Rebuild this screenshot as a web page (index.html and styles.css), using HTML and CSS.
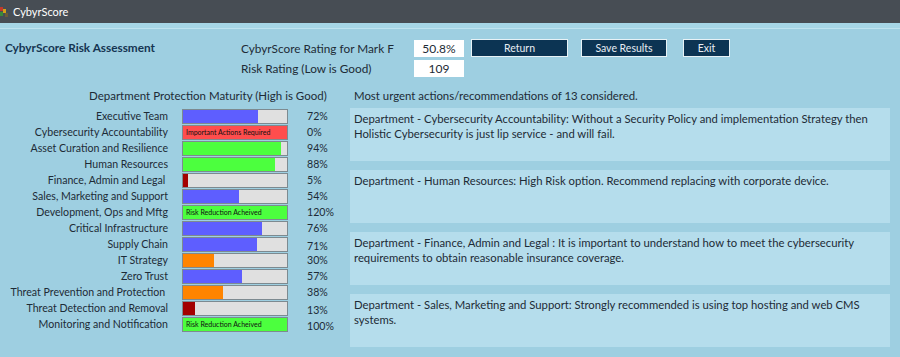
FILE: index.html
```html
<!DOCTYPE html>
<html lang="en">
<head>
    <meta charset="UTF-8">
    <title>CybyrScore</title>
    <link rel="stylesheet" href="styles.css">
</head>
<body>
<div class="titlebar">
    <svg class="appicon" width="9" height="12" viewBox="0 0 9 12">
        <rect x="0" y="1" width="3" height="4" fill="#c0392b"/>
        <rect x="3" y="3" width="3" height="4" fill="#d4a017"/>
        <rect x="0" y="6" width="3" height="4" fill="#3a8a3a"/>
        <rect x="5" y="7" width="3" height="4" fill="#6b5b3a"/>
    </svg>
    <span>CybyrScore</span>
</div>
<div class="band"></div>
<div class="main">
    <div class="top">
        <div class="brand">CybyrScore Risk Assessment</div>
        <div class="ratings">
            <label>CybyrScore Rating for Mark F</label><div class="value">50.8%</div>
            <label>Risk Rating (Low is Good)</label><div class="value">109</div>
        </div>
        <div class="buttons">
            <button class="btn btn-return">Return</button>
            <button class="btn btn-save">Save Results</button>
            <button class="btn btn-exit">Exit</button>
        </div>
    </div>

    <div class="content">
        <div class="maturity">
            <div class="heading">Department Protection Maturity (High is Good)</div>
            <div class="rows">
                <div class="row"><span class="name">Executive Team</span><div class="bar"><div class="fill blue" style="width:72%"></div></div><span class="pct">72%</span></div>
                <div class="row"><span class="name">Cybersecurity Accountability</span><div class="bar"><div class="fill red" style="width:100%">Important Actions Required</div></div><span class="pct">0%</span></div>
                <div class="row"><span class="name">Asset Curation and Resilience</span><div class="bar"><div class="fill green" style="width:94%"></div></div><span class="pct">94%</span></div>
                <div class="row"><span class="name">Human Resources</span><div class="bar"><div class="fill green" style="width:88%"></div></div><span class="pct">88%</span></div>
                <div class="row"><span class="name">Finance, Admin and Legal&nbsp;</span><div class="bar"><div class="fill darkred" style="width:5%"></div></div><span class="pct">5%</span></div>
                <div class="row"><span class="name">Sales, Marketing and Support</span><div class="bar"><div class="fill blue" style="width:54%"></div></div><span class="pct">54%</span></div>
                <div class="row"><span class="name">Development, Ops and Mftg</span><div class="bar"><div class="fill green" style="width:100%">Risk Reduction Acheived</div></div><span class="pct">120%</span></div>
                <div class="row"><span class="name">Critical Infrastructure</span><div class="bar"><div class="fill blue" style="width:76%"></div></div><span class="pct">76%</span></div>
                <div class="row"><span class="name">Supply Chain</span><div class="bar"><div class="fill blue" style="width:71%"></div></div><span class="pct low">71%</span></div>
                <div class="row"><span class="name">IT Strategy</span><div class="bar"><div class="fill orange" style="width:30%"></div></div><span class="pct">30%</span></div>
                <div class="row"><span class="name">Zero Trust</span><div class="bar"><div class="fill blue" style="width:57%"></div></div><span class="pct">57%</span></div>
                <div class="row"><span class="name">Threat Prevention and Protection&nbsp;</span><div class="bar"><div class="fill orange" style="width:38%"></div></div><span class="pct">38%</span></div>
                <div class="row"><span class="name">Threat Detection and Removal</span><div class="bar"><div class="fill darkred" style="width:12%"></div></div><span class="pct low">13%</span></div>
                <div class="row"><span class="name">Monitoring and Notification</span><div class="bar"><div class="fill green" style="width:100%">Risk Reduction Acheived</div></div><span class="pct low">100%</span></div>
            </div>
        </div>

        <div class="actions">
            <div class="heading">Most urgent actions/recommendations of 13 considered.</div>
            <div class="box">Department - Cybersecurity Accountability: Without a Security Policy and implementation Strategy then Holistic Cybersecurity is just lip service - and will fail.</div>
            <div class="box">Department - Human Resources: High Risk option. Recommend replacing with corporate device.</div>
            <div class="box">Department - Finance, Admin and Legal : It is important to understand how to meet the cybersecurity requirements to obtain reasonable insurance coverage.</div>
            <div class="box">Department - Sales, Marketing and Support: Strongly recommended is using top hosting and web CMS systems.</div>
        </div>
    </div>
</div>
</body>
</html>
```

FILE: styles.css
```css
body{
    margin: 0;
    width: 900px;
    height: 357px;
    overflow: hidden;
    background: #9ecfe1;
    font-family: Lato, "Noto Sans", sans-serif;
    color: #1d2b36;
}
.titlebar{
    height: 23px;
    background: #474d54;
    color: #ffffff;
    font-size: 11px;
    display: flex;
    align-items: center;
    gap: 4px;
}
.band{
    height: 5px;
    background: #a6d6e6;
    border-bottom: 1px solid #bfe3ef;
}
.main{
    padding: 9px 0 0 5px;
}
.top{
    display: flex;
    align-items: flex-start;
}
.brand{
    width: 236px;
    font-size: 11.8px;
    font-weight: bold;
    color: #153552;
    padding-top: 2px;
    white-space: nowrap;
}
.ratings{
    display: grid;
    grid-template-columns: 173px 50px;
    row-gap: 3px;
    padding-top: 2px;
    font-size: 11.8px;
}
.ratings label{
    line-height: 17px;
    white-space: nowrap;
}
.value{
    background: #ffffff;
    height: 17px;
    line-height: 17px;
    text-align: center;
    font-size: 12px;
}
.buttons{
    display: flex;
    padding-top: 1px;
    margin-left: 7px;
}
.btn{
    height: 18px;
    background: #0c3453;
    color: #e8eef3;
    border: 1px solid #e8f2f6;
    font-family: inherit;
    font-size: 10.5px;
    padding: 0;
}
.btn-return{ width: 97px; }
.btn-save{ width: 86px; margin-left: 13px; }
.btn-exit{ width: 47px; margin-left: 16px; }

.content{
    display: flex;
    margin-top: 11px;
}
.maturity{
    width: 345px;
}
.maturity .heading{
    font-size: 11.5px;
    padding-left: 84px;
    height: 20px;
    line-height: 16px;
    white-space: nowrap;
}
.row{
    display: flex;
    align-items: center;
    height: 16px;
    font-size: 10.6px;
}
.name{
    width: 163px;
    text-align: right;
    white-space: nowrap;
}
.bar{
    margin-left: 14px;
    width: 104px;
    height: 13px;
    border: 1px solid #7d8a90;
    background: #e0e0e0;
    display: flex;
}
.fill{
    height: 100%;
    font-size: 7px;
    line-height: 13px;
    padding-left: 3px;
    box-sizing: border-box;
    white-space: nowrap;
    color: #111111;
}
.blue{ background: #5e5eff; }
.red{ background: #ff4d4d; }
.green{ background: #4cff3e; }
.orange{ background: #ff8400; }
.darkred{ background: #a30000; }
.pct{
    margin-left: 19px;
}
.pct.low{
    padding-top: 4px;
}

.actions{
    width: 540px;
}
.actions .heading{
    font-size: 11.4px;
    padding-left: 4px;
    height: 20px;
    line-height: 16px;
    white-space: nowrap;
}
.box{
    background: #b5ddec;
    height: 45px;
    padding: 3px 4px 5px 4px;
    margin-bottom: 9px;
    font-size: 11.3px;
    line-height: 15px;
}
```
